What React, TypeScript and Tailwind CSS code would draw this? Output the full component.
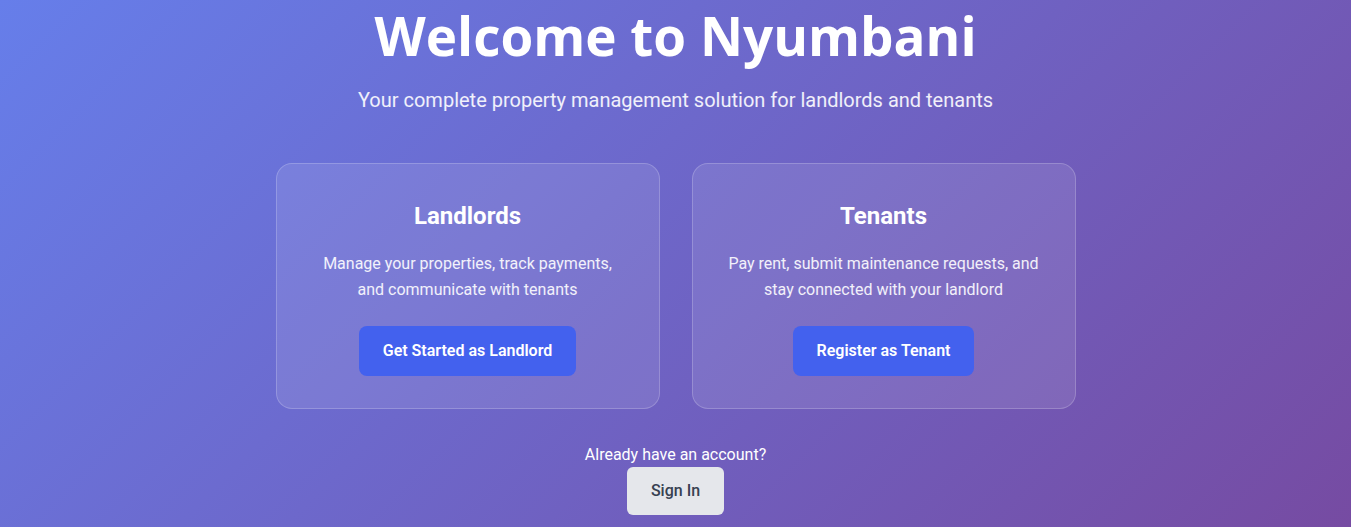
const roles = [
  {
    title: "Landlords",
    text: "Manage your properties, track payments, and communicate with tenants",
    action: "Get Started as Landlord",
  },
  {
    title: "Tenants",
    text: "Pay rent, submit maintenance requests, and stay connected with your landlord",
    action: "Register as Tenant",
  },
];

export default function App() {
  return (
    <div className="flex min-h-screen flex-col items-center bg-[linear-gradient(135deg,#667eea_0%,#764ba2_100%)] pt-[4px] font-['Roboto',sans-serif] text-base/[1.6] text-white">
      <h1 className="mb-4 font-['Open_Sans',sans-serif] text-[53px]/[1.2] font-bold">
        Welcome to Nyumbani
      </h1>
      <p className="mb-[47px] text-xl/[1.6] text-white/90">
        Your complete property management solution for landlords and tenants
      </p>

      {/* Role cards */}
      <div className="grid grid-cols-2 gap-8">
        {roles.map((r) => (
          <div
            key={r.title}
            className="flex w-[384px] flex-col items-center rounded-2xl border border-white/20 bg-white/10 px-8 pt-[33px] pb-8 text-center"
          >
            <h2 className="mb-4 text-2xl/[1.6] font-bold">{r.title}</h2>
            <p className="mb-6 text-base/[1.6] text-white/90">{r.text}</p>
            <button className="rounded-lg bg-[#4361ee] px-6 py-3 text-base/[1.6] font-semibold text-white">
              {r.action}
            </button>
          </div>
        ))}
      </div>

      <div className="mt-[33px] flex flex-col items-center">
        <p className="text-base/[1.6]">Already have an account?</p>
        <button className="rounded-md bg-[#e5e7eb] px-6 py-3 text-base/[1.5] font-medium text-[#374151]">
          Sign In
        </button>
      </div>
    </div>
  );
}
